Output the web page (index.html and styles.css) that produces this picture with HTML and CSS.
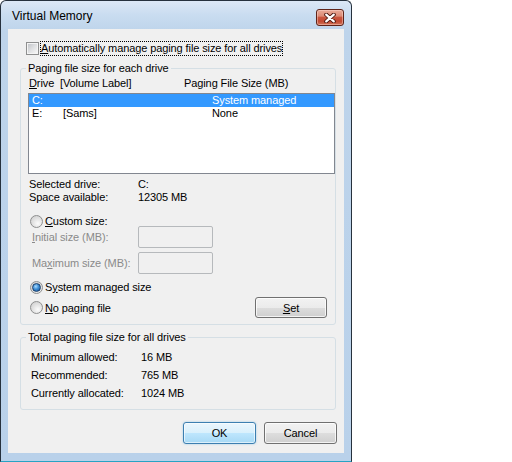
FILE: index.html
```html
<!DOCTYPE html>
<html>
<head>
<meta charset="utf-8">
<link rel="stylesheet" href="styles.css">
</head>
<body>
<div class="window">
  <div class="titlebar">
    <span class="title">Virtual Memory</span>
    <span class="close">
      <svg width="12" height="10" viewBox="0 0 12 10">
        <path d="M2.2 1.6 L9.8 8.4 M9.8 1.6 L2.2 8.4" stroke="#4d1810" stroke-width="4" stroke-linecap="round" fill="none"/>
        <path d="M2.2 1.6 L9.8 8.4 M9.8 1.6 L2.2 8.4" stroke="#ffffff" stroke-width="2.2" stroke-linecap="round" fill="none"/>
      </svg>
    </span>
  </div>
  <div class="client">
    <div class="check-row">
      <span class="checkbox"></span>
      <span class="focus"><u>A</u>utomatically manage paging file size for all drives</span>
    </div>

    <fieldset class="group g1">
      <legend>Paging file size for each drive</legend>
      <div class="list-head">
        <span><u>D</u>rive</span>
        <span>[Volume Label]</span>
        <span>Paging File Size (MB)</span>
      </div>
      <div class="listbox">
        <div class="row sel"><span>C:</span><span></span><span>System managed</span></div>
        <div class="row"><span>E:</span><span>[Sams]</span><span>None</span></div>
      </div>
      <div class="info">
        <span>Selected drive:</span><span>C:</span>
        <span>Space available:</span><span>12305 MB</span>
      </div>
      <div class="radio-row custom">
        <span class="radio"></span><span class="rlabel"><u>C</u>ustom size:</span>
      </div>
      <div class="size-row">
        <span class="dim-label"><u>I</u>nitial size (MB):</span>
        <span class="textbox"></span>
      </div>
      <div class="size-row second">
        <span class="dim-label">Ma<u>x</u>imum size (MB):</span>
        <span class="textbox"></span>
      </div>
      <div class="radio-row system">
        <span class="radio on"></span><span class="rlabel">S<u>y</u>stem managed size</span>
      </div>
      <div class="radio-row nopage">
        <span class="radio"></span><span class="rlabel"><u>N</u>o paging file</span>
        <span class="btn set"><u>S</u>et</span>
      </div>
    </fieldset>

    <fieldset class="group g2">
      <legend>Total paging file size for all drives</legend>
      <div class="totals">
        <span>Minimum allowed:</span><span>16 MB</span>
        <span>Recommended:</span><span>765 MB</span>
        <span>Currently allocated:</span><span>1024 MB</span>
      </div>
    </fieldset>

    <div class="buttons">
      <span class="btn default">OK</span>
      <span class="btn">Cancel</span>
    </div>
  </div>
</div>
</body>
</html>
```

FILE: styles.css
```css
* { box-sizing: border-box; }
html, body { margin: 0; padding: 0; background: #ffffff; }
body {
  font-family: "Liberation Sans", Arial, sans-serif;
  font-size: 11px;
  letter-spacing: -0.1px;
  color: #000000;
}

.window {
  width: 352px;
  height: 462px;
  border: 1px solid #26313d;
  border-bottom-color: #27a3c4;
  border-radius: 6px 6px 0 0;
  background: linear-gradient(to bottom, #dce8f6 0px, #c9dcf0 14px, #bed4eb 30px, #b9d1ea 100%);
  padding: 0 7px 8px 7px;
  display: flex;
  flex-direction: column;
}

.titlebar {
  height: 28px;
  flex: none;
  display: flex;
  align-items: flex-start;
  padding: 8px 0 0 4px;
}
.title {
  font-size: 12px;
  line-height: 15px;
  letter-spacing: 0;
  color: #000000;
}
.close {
  margin-left: auto;
  width: 28px;
  height: 17px;
  border: 1px solid #5f2419;
  border-radius: 3px;
  background: linear-gradient(to bottom, #e9aa98 0%, #dc8b76 40%, #c9553e 50%, #c24a33 75%, #d2765a 100%);
  box-shadow: inset 0 0 0 1px rgba(255, 220, 210, 0.45);
  display: flex;
  align-items: center;
  justify-content: center;
}
.close svg { display: block; }

.client {
  flex: 1;
  background: #f0f0f0;
  padding-top: 12px;
}

.check-row {
  height: 15px;
  display: flex;
  align-items: center;
  padding-left: 18px;
}
.checkbox {
  width: 13px;
  height: 13px;
  border: 1px solid #8e8f8f;
  background: #f4f4f4;
  padding: 1px;
}
.checkbox::after {
  content: "";
  display: block;
  width: 9px;
  height: 9px;
  background: linear-gradient(135deg, #c3c6ca 0%, #dfe0e2 50%, #f6f6f6 100%);
}
.focus {
  margin-left: 1px;
  border: 1px dotted #000000;
  line-height: 13px;
  display: inline-block;
}

.group {
  border: 1px solid #d5dfe5;
  border-radius: 3px;
  margin: 5px 8px 0 12px;
  padding: 0;
  min-width: 0;
}
.group legend {
  margin-left: 5px;
  padding: 0 2px;
  line-height: 15px;
}
.g1 { padding-bottom: 6px; }

.list-head {
  display: grid;
  grid-template-columns: 31px 124px auto;
  height: 15px;
  line-height: 15px;
  padding-left: 8px;
}

.listbox {
  margin: 2px 0 0 7px;
  height: 81px;
  border: 1px solid #828790;
  background: #ffffff;
}
.row {
  display: grid;
  grid-template-columns: 31px 149px auto;
  height: 13px;
  line-height: 13px;
  padding-left: 3px;
}
.row.sel {
  background: #3399ff;
  color: #ffffff;
}

.info {
  margin-top: 4px;
  display: grid;
  grid-template-columns: 109px auto;
  line-height: 13px;
  padding-left: 8px;
}

.radio-row {
  display: flex;
  align-items: center;
  padding-left: 9px;
}
.radio {
  width: 13px;
  height: 13px;
  border-radius: 50%;
  border: 1px solid #8e8f8f;
  background: radial-gradient(circle at 62% 68%, #fbfbfb 0%, #e4e4e4 45%, #c9c9c9 100%);
  flex: none;
  display: flex;
  align-items: center;
  justify-content: center;
}
.radio.on::after {
  content: "";
  width: 7px;
  height: 7px;
  border-radius: 50%;
  border: 1px solid #1b3f6b;
  background: radial-gradient(circle at 40% 35%, #a9dcff 0%, #3f8fd6 45%, #164d8c 100%);
}
.rlabel { margin-left: 2px; }

.custom {
  height: 13px;
  line-height: 13px;
  margin-top: 11px;
}
.size-row {
  display: flex;
  align-items: center;
  height: 22px;
  margin-top: -2px;
  padding-left: 11px;
}
.size-row.second { margin-top: 4px; }
.dim-label {
  width: 106px;
  color: #8a8a8a;
}
.textbox {
  width: 75px;
  height: 22px;
  border: 1px solid #b6b9bc;
  border-radius: 2px;
  background: #f0f0f0;
}

.system {
  height: 15px;
  line-height: 15px;
  margin-top: 6px;
}
.nopage {
  height: 21px;
  margin-top: 2px;
}

.btn {
  display: flex;
  align-items: center;
  justify-content: center;
  border: 1px solid #707070;
  border-radius: 3px;
  background: linear-gradient(to bottom, #f2f2f2 0%, #ebebeb 50%, #dddddd 51%, #cfcfcf 100%);
  box-shadow: inset 0 0 0 1px rgba(255, 255, 255, 0.75);
  color: #000000;
}
.set {
  margin-left: auto;
  margin-right: 8px;
  width: 72px;
  height: 21px;
}

.g2 { margin-top: 5px; padding-bottom: 7px; }
.totals {
  display: grid;
  grid-template-columns: 110px auto;
  line-height: 18px;
  padding: 3px 0 0 10px;
}

.buttons {
  display: flex;
  justify-content: flex-end;
  gap: 8px;
  margin: 12px 7px 0 0;
}
.buttons .btn {
  width: 73px;
  height: 22px;
}
.btn.default {
  border-color: #3c7fb1;
  background: linear-gradient(to bottom, #eaf6fd 0%, #d9f0fc 50%, #bee6fd 51%, #a7d9f5 100%);
  box-shadow: inset 0 0 0 1px rgba(255, 255, 255, 0.6), 0 0 2px rgba(60, 160, 220, 0.5);
}
```
